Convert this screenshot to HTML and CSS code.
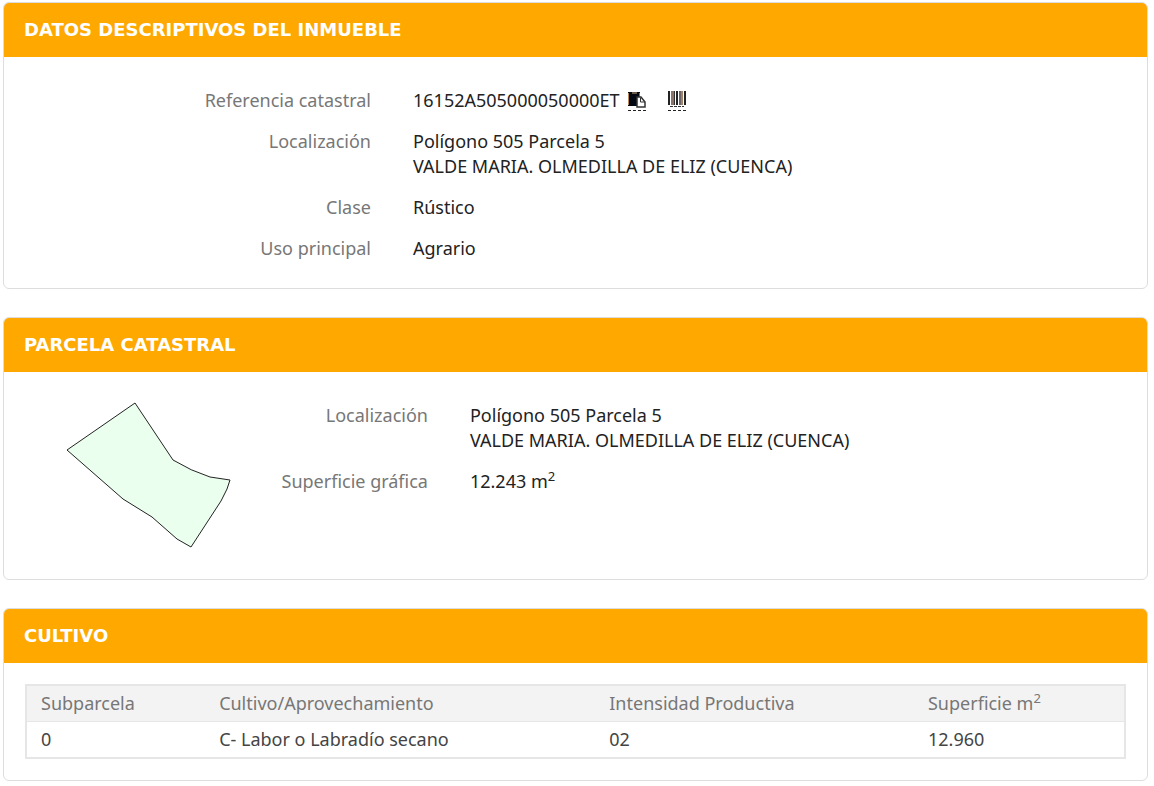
FILE: index.html
```html
<!DOCTYPE html>
<html lang="es">
<head>
    <meta charset="UTF-8">
    <meta name="viewport" content="width=device-width, initial-scale=1.0">
    <link rel="stylesheet" href="styles.css">
    <title>Datos descriptivos del inmueble</title>
</head>
<body>
    <section class="panel">
        <h2 class="panel-heading">DATOS DESCRIPTIVOS DEL INMUEBLE</h2>
        <div class="panel-body">
            <dl class="datos">
                <dt>Referencia catastral</dt>
                <dd class="referencia">
                    <span>16152A505000050000ET</span>
                    <button type="button" class="icono" aria-label="Copiar referencia">
                        <svg width="18" height="18" viewBox="0 0 18 18">
                            <path d="M0 1h12v14H0z" fill="#050a12"/>
                            <path d="M4 1h5v2H4z" fill="#6b5a48"/>
                            <path d="M0 2h1v12H0z" fill="#b98a58"/>
                            <path d="M11 2h1v4h-1z" fill="#4a7fb0"/>
                            <path d="M9 6h4l4 5v5H9z" fill="#fff" stroke="#333" stroke-width="1.500"/>
                            <path d="M12.500 6.500v4.500h4.500" fill="none" stroke="#333"/>
                        </svg>
                    </button>
                    <button type="button" class="icono" aria-label="Código de barras">
                        <svg width="18" height="18" viewBox="0 0 18 18">
                            <path d="M0 0h2v14H0zM8 0h2v14H8zM16 0h2v14h-2z" fill="#222"/>
                            <path d="M3 0h3v14H3z" fill="#8b7468"/>
                            <path d="M6 0h1v14H6z" fill="#333"/>
                            <path d="M11 0h2v14h-2z" fill="#6c6468"/>
                            <path d="M13 0h2v14h-2z" fill="#a08468"/>
                            <path d="M2 15.500h14" stroke="#333" stroke-dasharray="3 1"/>
                        </svg>
                    </button>
                </dd>
                <dt>Localización</dt>
                <dd>Polígono 505 Parcela 5<br>VALDE MARIA. OLMEDILLA DE ELIZ (CUENCA)</dd>
                <dt>Clase</dt>
                <dd>Rústico</dd>
                <dt>Uso principal</dt>
                <dd>Agrario</dd>
            </dl>
        </div>
    </section>

    <section class="panel">
        <h2 class="panel-heading">PARCELA CATASTRAL</h2>
        <div class="panel-body parcela">
            <svg class="croquis" width="166" height="148" viewBox="0 0 166 148" role="img" aria-label="Croquis de la parcela">
                <path d="M69 1L107 58Q125 69 144 75L164 78L161 87L155 99L125 145L111 137L86 115L57 97L1 48z" fill="#ebffee" stroke="#222"/>
            </svg>
            <dl class="datos">
                <dt>Localización</dt>
                <dd>Polígono 505 Parcela 5<br>VALDE MARIA. OLMEDILLA DE ELIZ (CUENCA)</dd>
                <dt>Superficie gráfica</dt>
                <dd>12.243 m<sup>2</sup></dd>
            </dl>
        </div>
    </section>

    <section class="panel">
        <h2 class="panel-heading">CULTIVO</h2>
        <div class="panel-body">
            <table class="cultivo">
                <thead>
                    <tr>
                        <th class="col-sub">Subparcela</th>
                        <th class="col-cultivo">Cultivo/Aprovechamiento</th>
                        <th class="col-intensidad">Intensidad Productiva</th>
                        <th>Superficie m<sup>2</sup></th>
                    </tr>
                </thead>
                <tbody>
                    <tr>
                        <td>0</td>
                        <td>C- Labor o Labradío secano</td>
                        <td>02</td>
                        <td>12.960</td>
                    </tr>
                </tbody>
            </table>
        </div>
    </section>
</body>
</html>
```
FILE: styles.css
```css
* {
    box-sizing: border-box;
}

body {
    margin: 0;
    padding: 2px 6px 4px 3px;
    background-color: #fff;
    color: #222;
    font-family: "Noto Sans", Tahoma, sans-serif;
    font-size: 18px;
    line-height: 25px;
}

.panel {
    margin-bottom: 28px;
    border: 1px solid #ddd;
    border-radius: 6px;
    overflow: hidden;
}

.panel:last-child {
    margin-bottom: 0;
}

.panel-heading {
    margin: 0;
    padding: 15px 20px;
    background-color: #ffa800;
    color: #fff;
    font-family: "DejaVu Sans", Verdana, sans-serif;
    font-size: 18px;
    font-weight: bold;
    line-height: 24px;
}

.panel-body {
    padding: 21px;
}

.datos {
    display: grid;
    grid-template-columns: 33fr 68fr;
    gap: 16px 42px;
    margin: 0;
    padding: 10px 0 6px;
}

dt {
    color: #777;
    text-align: right;
}

dd {
    margin: 0;
}

.referencia {
    display: flex;
    align-items: center;
}

.icono {
    width: 18px;
    height: 20px;
    margin-left: 8px;
    padding: 0;
    border: none;
    border-bottom: 1px dashed #222;
    background: none;
    cursor: pointer;
}

.icono + .icono {
    margin-left: 22px;
}

.icono svg {
    display: block;
}

sup {
    font-size: 13px;
    line-height: 0;
}

.parcela {
    display: flex;
    align-items: flex-start;
}

.parcela .datos {
    flex: 1;
    grid-template-columns: 23fr 77fr;
}

.croquis {
    flex: none;
    margin: 9px 0 8px 41px;
}

.cultivo {
    width: 100%;
    border: 2px solid #e6e6e6;
    border-collapse: collapse;
    table-layout: fixed;
    text-align: left;
}

.cultivo th,
.cultivo td {
    padding: 5px 14px;
}

.cultivo th {
    border-bottom: 1px solid #e6e6e6;
    background-color: #f3f3f3;
    color: #777;
    font-weight: normal;
}

.cultivo td {
    color: #444;
}

.col-sub {
    width: 16.3%;
}

.col-cultivo {
    width: 35.5%;
}

.col-intensidad {
    width: 29%;
}
```
